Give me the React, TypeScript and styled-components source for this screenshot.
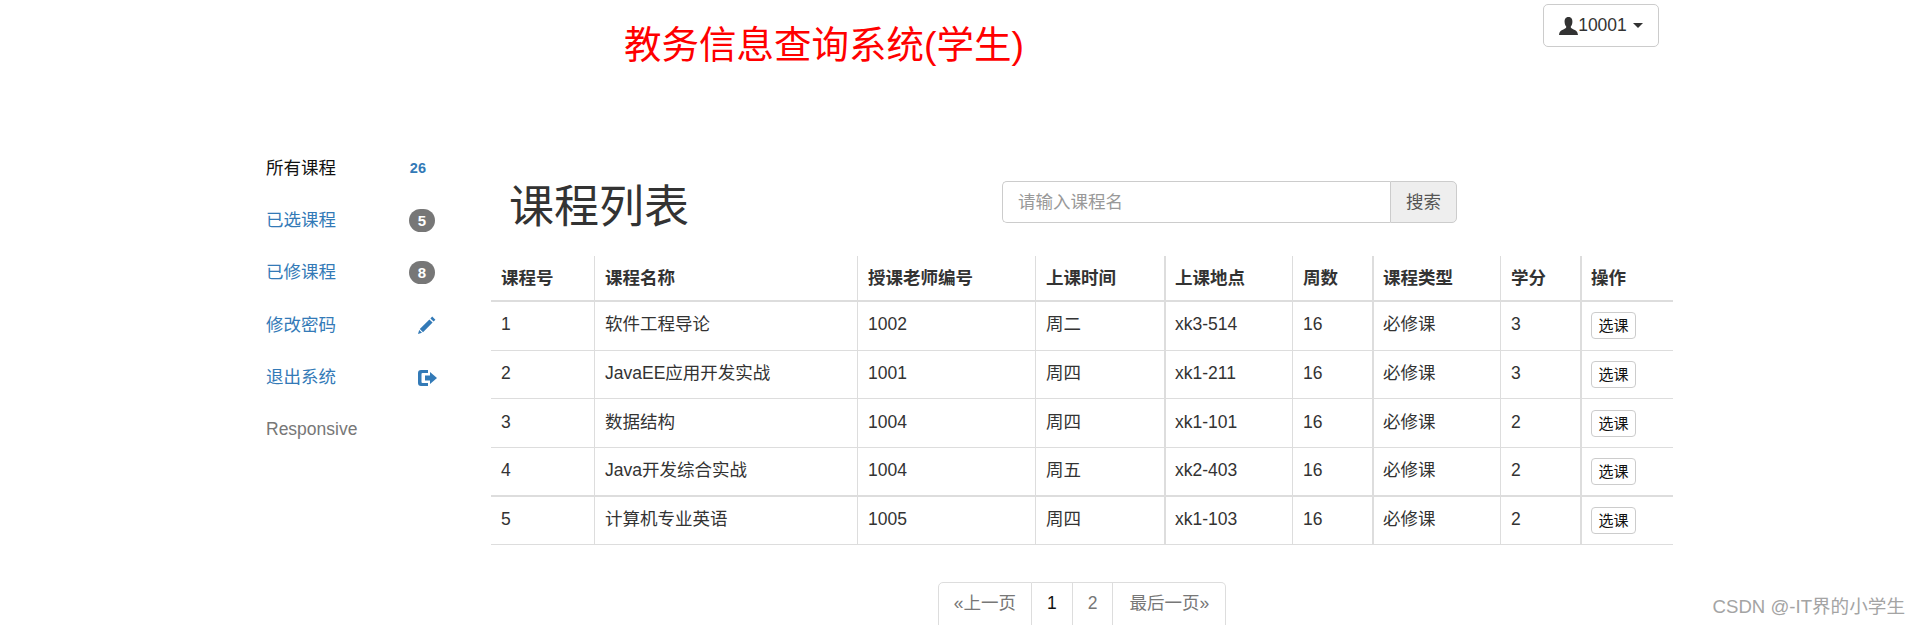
import React from "react";
import styled, { createGlobalStyle } from "styled-components";

const Global = createGlobalStyle`
  html, body { margin: 0; padding: 0; height: 100%; overflow: hidden; background: #fff; }
  body { font-family: "Liberation Sans", "Noto Sans CJK SC", sans-serif; font-size: 17.5px; line-height: 25px; color: #333; }
  * { box-sizing: border-box; }
`;

const Page = styled.div`
  position: relative;
  width: 1920px;
  height: 625px;
  overflow: hidden;
`;

const Header = styled.header`
  display: flex;
  align-items: flex-start;
  height: 141px;
  padding: 4px 261px 0 624px;
`;

const Title = styled.h1`
  margin: 17px 0 0;
  font-size: 37.5px;
  line-height: 48px;
  font-weight: 400;
  color: #ff0000;
`;

const UserButton = styled.button`
  margin-left: auto;
  display: flex;
  align-items: center;
  justify-content: center;
  width: 116px;
  height: 43px;
  padding: 0;
  background: #fff;
  border: 1px solid #ccc;
  border-radius: 5px;
  font: inherit;
  color: #333;
`;

const Caret = styled.span`
  margin-left: 6px;
  width: 0;
  height: 0;
  border-top: 5px solid #333;
  border-left: 5px solid transparent;
  border-right: 5px solid transparent;
`;

const Body = styled.div`
  display: flex;
  align-items: flex-start;
  padding-left: 266px;
`;

const Sidebar = styled.nav`
  width: 225px;
  flex: none;
  padding-top: 1px;
`;

const NavItem = styled.a<{ $tone: "active" | "link" | "muted" }>`
  display: flex;
  align-items: center;
  justify-content: space-between;
  width: 169px;
  height: 52.4px;
  margin-top: ${(p) => (p.$tone === "muted" ? "-1px" : "0")};
  color: ${(p) => (p.$tone === "active" ? "#111" : p.$tone === "link" ? "#337ab7" : "#777")};
`;

const Count = styled.span`
  margin-right: 9px;
  font-size: 14.5px;
  font-weight: 700;
  color: #337ab7;
`;

const Badge = styled.span`
  display: flex;
  align-items: center;
  justify-content: center;
  width: 26px;
  height: 23px;
  border-radius: 12px;
  background: #777;
  color: #fff;
  font-size: 15px;
  font-weight: 700;
`;

const NavIcon = styled.svg`
  width: 20px;
  height: 20px;
  margin-right: -2px;
  fill: #337ab7;
`;

const Main = styled.main`
  width: 1182px;
  flex: none;
`;

const TitleRow = styled.div`
  display: flex;
  align-items: center;
  height: 115px;
  padding: 7px 0 0 18px;
`;

const Heading = styled.h2`
  margin: 11px 0 0;
  width: 493px;
  font-size: 45px;
  line-height: 60px;
  font-weight: 400;
  color: #333;
`;

const Search = styled.div`
  display: flex;
  width: 455px;
  height: 42px;
`;

const SearchInput = styled.input`
  flex: 1;
  min-width: 0;
  padding: 0 16px 0 15px;
  border: 1px solid #ccc;
  border-right: 0;
  border-radius: 5px 0 0 5px;
  font: inherit;
  color: #333;
  &::placeholder { color: #999; opacity: 1; }
`;

const SearchAddon = styled.span`
  display: flex;
  align-items: center;
  justify-content: center;
  width: 67px;
  background: #eee;
  border: 1px solid #ccc;
  border-radius: 0 5px 5px 0;
  color: #555;
`;

const Table = styled.table`
  width: 1182px;
  table-layout: fixed;
  border-collapse: separate;
  border-spacing: 0;
`;

const cellLines = `
  border-left: 1px solid #ddd;
  &:first-child { border-left: 0; }
  &:nth-child(5), &:nth-child(7), &:nth-child(9) { border-left-width: 2px; padding-left: 9px; }
`;

const HeadCell = styled.th`
  height: 46px;
  padding: 0 10px;
  text-align: left;
  font-weight: 700;
  border-bottom: 2px solid #ddd;
  white-space: nowrap;
  ${cellLines}
`;

const Cell = styled.td<{ $thick?: boolean }>`
  height: 48.7px;
  padding: 0 10px 2px;
  border-bottom: ${(p) => (p.$thick ? "2px" : "1px")} solid #ddd;
  white-space: nowrap;
  ${cellLines}
`;

const SelectButton = styled.button`
  display: block;
  width: 45px;
  height: 27px;
  margin-top: 2px;
  padding: 0;
  background: #fff;
  border: 1px solid #ccc;
  border-radius: 4px;
  font: inherit;
  font-size: 15px;
  line-height: 25px;
  color: #111;
`;

const Pager = styled.div`
  display: flex;
  justify-content: center;
  margin: 37px 0 0 0;
`;

const PageLink = styled.a<{ $active?: boolean; $wide?: boolean }>`
  display: flex;
  align-items: center;
  height: 50px;
  padding: 0 ${(p) => (p.$wide ? "16px" : "15px")} 7px;
  border: 1px solid #ddd;
  border-left-width: 0;
  color: ${(p) => (p.$active ? "#111" : "#777")};
  &:first-child { border-left-width: 1px; border-radius: 5px 0 0 5px; }
  &:last-child { border-radius: 0 5px 5px 0; }
`;

const Watermark = styled.div`
  position: absolute;
  right: 15px;
  bottom: 8px;
  font-size: 18.6px;
  line-height: 20px;
  color: #a4a4a4;
`;

const columns = [103, 263, 178, 129, 128, 80, 128, 80, 93];
const heads = ["课程号", "课程名称", "授课老师编号", "上课时间", "上课地点", "周数", "课程类型", "学分", "操作"];
const rows = [
  ["1", "软件工程导论", "1002", "周二", "xk3-514", "16", "必修课", "3"],
  ["2", "JavaEE应用开发实战", "1001", "周四", "xk1-211", "16", "必修课", "3"],
  ["3", "数据结构", "1004", "周四", "xk1-101", "16", "必修课", "2"],
  ["4", "Java开发综合实战", "1004", "周五", "xk2-403", "16", "必修课", "2"],
  ["5", "计算机专业英语", "1005", "周四", "xk1-103", "16", "必修课", "2"],
];

const PencilIcon = () => (
  <NavIcon viewBox="0 0 20 20">
    <path d="M15.2 1.6 18.4 4.8 16.6 6.6 13.4 3.4ZM12.4 4.4 15.6 7.6 6 17.2 2.8 14ZM2.2 15 5 17.8 1 19Z" />
  </NavIcon>
);

const LogoutIcon = () => (
  <NavIcon viewBox="0 0 20 20">
    <path d="M4 2H11V5H5.5Q4.5 5 4.5 6V14Q4.5 15 5.5 15H11V18H4Q1 18 1 15V5Q1 2 4 2Z" />
    <path d="M8 7.5H13V4L20 10 13 16V12.5H8Z" />
  </NavIcon>
);

const UserIcon = () => (
  <svg width="19" height="18" viewBox="0 0 19 18" fill="#333">
    <path d="M9.5 0C12.4 0 13.6 2.2 13.4 5 13.3 7 12.6 8.6 11.8 9.6 11.5 10.9 12.2 11.4 14.2 12.3 16.6 13.4 18.6 14.2 19 18H0C.4 14.2 2.4 13.4 4.8 12.3 6.8 11.4 7.5 10.9 7.2 9.6 6.4 8.6 5.7 7 5.6 5 5.4 2.2 6.6 0 9.5 0Z" />
  </svg>
);

export default function App() {
  return (
    <Page>
      <Global />
      <Header>
        <Title>教务信息查询系统(学生)</Title>
        <UserButton>
          <UserIcon />
          10001
          <Caret />
        </UserButton>
      </Header>
      <Body>
        <Sidebar>
          <NavItem $tone="active">所有课程<Count>26</Count></NavItem>
          <NavItem $tone="link">已选课程<Badge>5</Badge></NavItem>
          <NavItem $tone="link">已修课程<Badge>8</Badge></NavItem>
          <NavItem $tone="link">修改密码<PencilIcon /></NavItem>
          <NavItem $tone="link">退出系统<LogoutIcon /></NavItem>
          <NavItem $tone="muted">Responsive</NavItem>
        </Sidebar>
        <Main>
          <TitleRow>
            <Heading>课程列表</Heading>
            <Search>
              <SearchInput placeholder="请输入课程名" />
              <SearchAddon>搜索</SearchAddon>
            </Search>
          </TitleRow>
          <Table>
            <colgroup>
              {columns.map((w, i) => (
                <col key={i} width={w} />
              ))}
            </colgroup>
            <thead>
              <tr>
                {heads.map((h) => (
                  <HeadCell key={h}>{h}</HeadCell>
                ))}
              </tr>
            </thead>
            <tbody>
              {rows.map((r, n) => (
                <tr key={r[0]}>
                  {r.map((c, i) => (
                    <Cell key={i} $thick={n === 3}>{c}</Cell>
                  ))}
                  <Cell $thick={n === 3}>
                    <SelectButton>选课</SelectButton>
                  </Cell>
                </tr>
              ))}
            </tbody>
          </Table>
          <Pager>
            <PageLink>«上一页</PageLink>
            <PageLink $active>1</PageLink>
            <PageLink>2</PageLink>
            <PageLink $wide>最后一页»</PageLink>
          </Pager>
        </Main>
      </Body>
      <Watermark>CSDN @-IT界的小学生</Watermark>
    </Page>
  );
}
